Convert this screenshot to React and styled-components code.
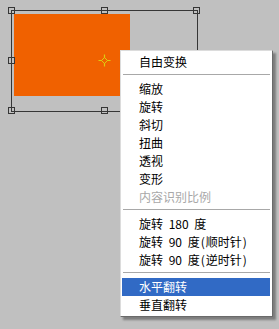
import React from "react"
import styled, { createGlobalStyle } from "styled-components"

const GlobalStyle = createGlobalStyle`
  html, body {
    margin: 0;
    padding: 0;
    background: #c0c0c0;
  }
`

const Canvas = styled.div`
  position: relative;
  width: 279px;
  height: 329px;
  box-sizing: border-box;
  padding: 14px 0 0 14px;
  overflow: hidden;
  background: #c0c0c0;
  font-family: "Noto Sans CJK SC", "Noto Sans", sans-serif;
`

const Layer = styled.div`
  width: 116px;
  height: 82px;
  background: #f06100;
`

const BoundBox = styled.div`
  position: absolute;
  left: 11px;
  top: 10px;
  width: 185px;
  height: 100px;
  border: 1px solid #363636;
`

const Handle = styled.div`
  position: absolute;
  left: ${(p) => p.$x}%;
  top: ${(p) => p.$y}%;
  width: 5px;
  height: 5px;
  margin: -4px 0 0 -4px;
  border: 1px solid #363636;
`

const Pivot = styled.svg`
  position: absolute;
  left: 85px;
  top: 42px;
`

const Menu = styled.ul`
  position: absolute;
  left: 120px;
  top: 50px;
  width: 148px;
  margin: 0;
  padding: 2px 2px 2px 1px;
  list-style: none;
  background: #fff;
  border-top: 1px solid #dcdcdc;
  border-left: 1px solid #dcdcdc;
  border-right: 1px solid #6a6a6a;
  border-bottom: 1px solid #6a6a6a;
  box-shadow: 3px 3px 2px rgba(0, 0, 0, 0.35);
`

const Item = styled.li`
  height: 18px;
  line-height: 18px;
  padding-left: 17px;
  font-size: 12px;
  white-space: pre;
  word-spacing: 3px;
  color: ${(p) => (p.$active ? "#fff" : p.$disabled ? "#a8a8a8" : "#000")};
  background: ${(p) => (p.$active ? "#316ac5" : "transparent")};
`

const Paren = styled.span`
  padding: 0 1px;
`

const Separator = styled.li`
  height: 1px;
  margin: 3px 0 5px 1px;
  background: #a8a8a8;
`

const handles = [
  [0, 0], [50, 0], [100, 0],
  [0, 50], [100, 50],
  [0, 100], [50, 100], [100, 100],
]

const menu = [
  { label: "自由变换" },
  "sep",
  { label: "缩放" },
  { label: "旋转" },
  { label: "斜切" },
  { label: "扭曲" },
  { label: "透视" },
  { label: "变形" },
  { label: "内容识别比例", disabled: true },
  "sep",
  { label: "旋转 180 度" },
  { label: "旋转 90 度", note: "顺时针" },
  { label: "旋转 90 度", note: "逆时针" },
  "sep",
  { label: "水平翻转", active: true },
  { label: "垂直翻转" },
]

export default function App() {
  return (
    <>
      <GlobalStyle />
      <Canvas>
        <Layer />
        <BoundBox>
          {handles.map(([x, y]) => (
            <Handle key={`${x}-${y}`} $x={x} $y={y} />
          ))}
          <Pivot width="15" height="15" viewBox="0 0 15 15">
            <path d="M7.5 4.5 L10.5 7.5 L7.5 10.5 L4.5 7.5 Z" fill="none" stroke="#dccc10" strokeWidth="1" />
            <path d="M7.5 1.5 L7.5 5 M7.5 10 L7.5 13.5 M1.5 7.5 L5 7.5 M10 7.5 L13.5 7.5" stroke="#dccc10" strokeWidth="1.2" />
          </Pivot>
        </BoundBox>
        <Menu>
          {menu.map((m, i) =>
            m === "sep" ? (
              <Separator key={i} />
            ) : (
              <Item key={i} $active={m.active} $disabled={m.disabled}>
                {m.label}
                {m.note && (
                  <>
                    <Paren>(</Paren>
                    {m.note}
                    <Paren>)</Paren>
                  </>
                )}
              </Item>
            )
          )}
        </Menu>
      </Canvas>
    </>
  )
}
